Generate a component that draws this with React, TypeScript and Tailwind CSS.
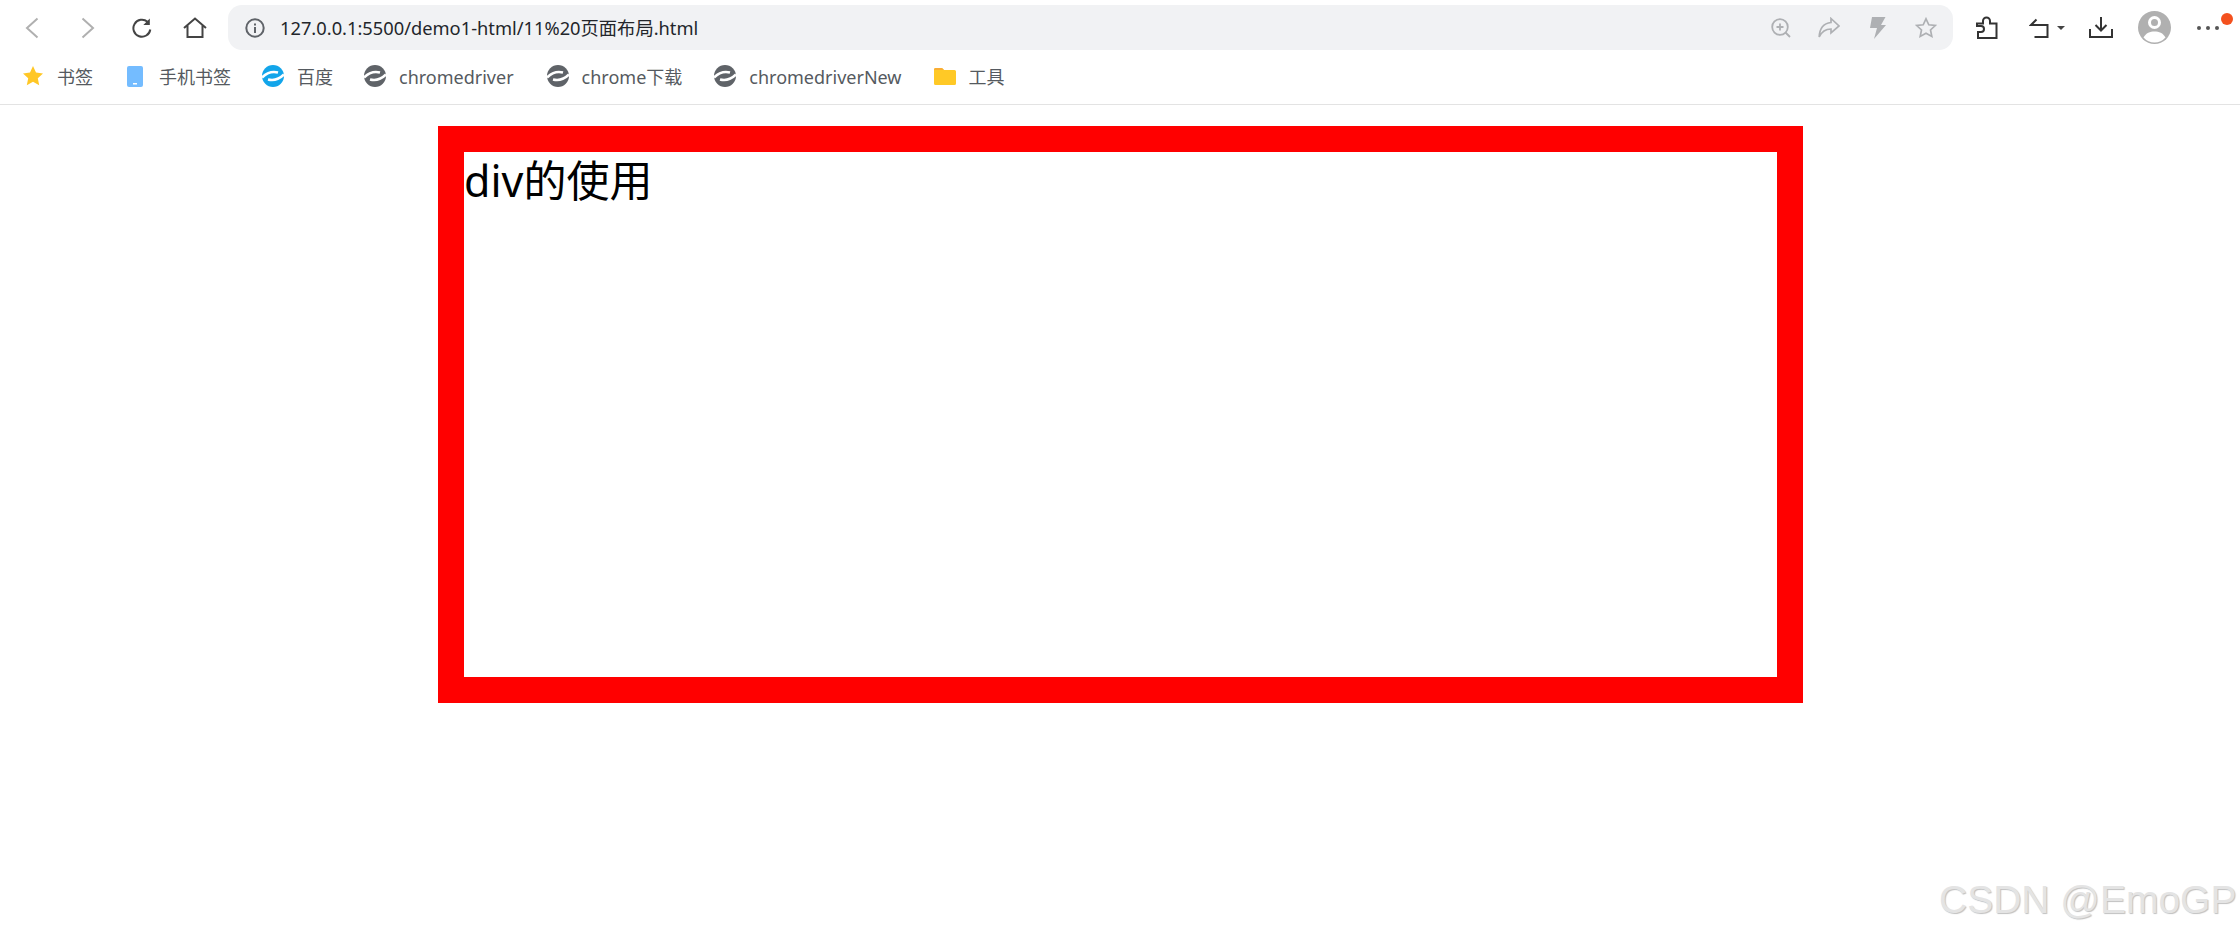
import type { ReactNode } from 'react';

const cjk = "font-['Noto_Sans','Noto_Sans_CJK_SC',sans-serif]";

function ChromeLogo({ color = '#5f6368' }: { color?: string }) {
  return (
    <svg width="22" height="22" viewBox="0 0 22 22" className="shrink-0">
      <circle cx="11" cy="11" r="11" fill={color} />
      <path
        d="M0 12.500C5 7.500 11 6.200 16 7.500M22 9.500C17 14.500 11 15.800 6 14.500"
        fill="none"
        stroke="#fff"
        strokeWidth="2.600"
      />
    </svg>
  );
}

function Star() {
  return (
    <svg width="20" height="20" viewBox="0 0 20 20" className="shrink-0">
      <path d="M10 0l3 6.6 7 .8-5.200 4.800 1.400 7L10 15.700 3.800 19.200l1.400-7L0 7.400l7-.8z" fill="#ffc726" />
    </svg>
  );
}

function Phone() {
  return (
    <svg width="16" height="21" viewBox="0 0 16 21" className="shrink-0">
      <rect width="16" height="21" rx="2" fill="#74bcff" />
      <rect x="6" y="17" width="4" height="1.500" fill="#fff" />
    </svg>
  );
}

function Folder() {
  return (
    <svg width="22" height="17" viewBox="0 0 22 17" className="shrink-0">
      <path d="M0 1.500A1.500 1.500 0 0 1 1.500 0H8l2 2h10.500A1.500 1.500 0 0 1 22 3.500v12a1.500 1.500 0 0 1-1.500 1.500h-19A1.500 1.500 0 0 1 0 15.500z" fill="#ffc926" />
      <path d="M0 1.500A1.500 1.500 0 0 1 1.500 0H8l2 2H0z" fill="#f9ad35" />
    </svg>
  );
}

function Bookmark({ icon, label, className }: { icon: ReactNode; label: string; className: string }) {
  return (
    <div className={`flex items-center ${className}`}>
      {icon}
      <span className="mt-[2px] text-[18px] leading-[24px] text-[#555a60] whitespace-nowrap">{label}</span>
    </div>
  );
}

export default function App() {
  return (
    <div className={`relative h-[935px] w-[2240px] overflow-hidden bg-white ${cjk}`}>
      {/* Nav row */}
      <div className="flex h-[55px] items-center">
        <svg width="14" height="22" viewBox="0 0 14 22" className="ml-[25px] shrink-0" fill="none" stroke="#b0b0b0" strokeWidth="2">
          <path d="M12.500 1.500L2 11l10.500 9.500" />
        </svg>
        <svg width="14" height="22" viewBox="0 0 14 22" className="ml-[42px] shrink-0" fill="none" stroke="#b0b0b0" strokeWidth="2">
          <path d="M1.500 1.500L12 11 1.500 20.500" />
        </svg>
        <svg width="20" height="20" viewBox="0 0 20 20" className="ml-[37px] shrink-0" fill="none" stroke="#444" strokeWidth="2">
          <path d="M15.500 3.800A8.500 8.500 0 1 0 18.300 11.500" />
          <path d="M17.800 0.500v6.500h-6.500z" fill="#444" stroke="none" />
        </svg>
        <svg width="24" height="21" viewBox="0 0 24 21" className="ml-[31px] shrink-0" fill="none" stroke="#444" strokeWidth="2">
          <path d="M1 11L12 1.500 23 11M4.500 8.500V20h15V8.500" />
        </svg>

        {/* Address bar */}
        <div className="ml-[21px] flex h-[45px] w-[1725px] items-center rounded-[14px] bg-[#f1f2f4]">
          <svg width="20" height="20" viewBox="0 0 20 20" className="ml-[17px] shrink-0" fill="none">
            <circle cx="10" cy="10" r="8.700" stroke="#5f6368" strokeWidth="2" />
            <rect x="9" y="9" width="2" height="6" fill="#5f6368" />
            <rect x="9" y="5.500" width="2" height="2" fill="#5f6368" />
          </svg>
          <span className="ml-[15px] whitespace-nowrap text-[18.3px] text-[#23262b]">
            127.0.0.1:5500/demo1-html/11%20页面布局.html
          </span>
          <svg width="20" height="20" viewBox="0 0 20 20" className="ml-auto shrink-0" fill="none" stroke="#aeb0b3" strokeWidth="1.800">
            <circle cx="9" cy="9" r="7.800" />
            <path d="M14.500 14.500L19 19M5.500 9h7M9 5.500v7" />
          </svg>
          <svg width="22" height="21" viewBox="0 0 22 21" className="ml-[27px] shrink-0" fill="none" stroke="#aeb0b3" strokeWidth="1.700">
            <path d="M13 1.500L21 9l-8 7v-4C8 12 4 14 1.200 20 1.500 12 5 6.500 13 5.500z" />
          </svg>
          <svg width="16" height="22" viewBox="0 0 16 22" className="ml-[30px] shrink-0">
            <path d="M2 0h13.500L11 8h5L4 22l3-11H0z" fill="#aeb0b3" />
          </svg>
          <svg width="22" height="21" viewBox="0 0 22 21" className="ml-[29px] mr-[16px] shrink-0" fill="none" stroke="#aeb0b3" strokeWidth="1.700">
            <path d="M11 1.800l2.800 6 6.500.7-4.800 4.500 1.300 6.400L11 16.200l-5.800 3.200 1.300-6.400L1.700 8.500l6.500-.7z" />
          </svg>
        </div>

        {/* Right side tools */}
        <svg width="22" height="23" viewBox="0 0 22 23" className="ml-[23px] shrink-0" fill="none" stroke="#333" strokeWidth="2">
          <path d="M1 7.500h6V5a3.500 3.500 0 0 1 7 0v2.500h6.500V22H2v-6h3a3 3 0 0 0 0-6H1z" />
        </svg>
        <svg width="20" height="20" viewBox="0 0 20 20" className="ml-[31px] shrink-0" fill="none" stroke="#333" strokeWidth="2">
          <path d="M7.500 1.500L2 7h16.500v12H5.500" />
        </svg>
        <svg width="8" height="4" viewBox="0 0 8 4" className="ml-[8px] shrink-0">
          <path d="M0 0h8L4 4z" fill="#444" />
        </svg>
        <svg width="24" height="21" viewBox="0 0 24 21" className="ml-[24px] shrink-0" fill="none" stroke="#333" strokeWidth="2">
          <path d="M12 0v13M6.500 8l5.500 5.500L17.500 8M1 12v8h22v-8" />
        </svg>
        <svg width="33" height="33" viewBox="0 0 33 33" className="ml-[25px] shrink-0">
          <circle cx="16.500" cy="16.500" r="16.500" fill="#b0b0b0" />
          <circle cx="16.500" cy="11.500" r="5" fill="none" stroke="#fff" strokeWidth="3" />
          <path d="M5.500 26.500C8 22 12 20.500 16.500 20.500S25 22 27.500 26.500A14.500 14.500 0 0 1 5.500 26.500z" fill="#fff" />
        </svg>
        <div className="ml-[26px] flex gap-[5px]">
          <span className="size-[4px] rounded-full bg-[#555]" />
          <span className="size-[4px] rounded-full bg-[#555]" />
          <span className="size-[4px] rounded-full bg-[#555]" />
        </div>
      </div>

      {/* Bookmarks row */}
      <div className="flex h-[50px] items-center border-b border-[#e3e3e3] pb-[7px] pl-[23px]">
        <Bookmark icon={<Star />} label="书签" className="gap-[14px]" />
        <Bookmark icon={<Phone />} label="手机书签" className="ml-[34px] gap-[16px]" />
        <Bookmark icon={<ChromeLogo color="#12a5ea" />} label="百度" className="ml-[31px] gap-[13px]" />
        <Bookmark icon={<ChromeLogo />} label="chromedriver" className="ml-[31px] gap-[13px]" />
        <Bookmark icon={<ChromeLogo />} label="chrome下载" className="ml-[33px] gap-[13px]" />
        <Bookmark icon={<ChromeLogo />} label="chromedriverNew" className="ml-[32px] gap-[13px]" />
        <Bookmark icon={<Folder />} label="工具" className="ml-[32px] gap-[13px]" />
      </div>

      {/* Page content */}
      <div className="ml-[438px] mt-[21px] h-[577px] w-[1365px] border-[26px] border-[#ff0000] text-[43px] leading-[58px] text-black">
        div的使用
      </div>

      {/* Notification dot + watermark */}
      <span className="absolute left-[2221px] top-[13px] size-[12px] rounded-full bg-[#f4511e]" />
      <span className="absolute left-[1939px] top-[875px] whitespace-nowrap font-['Liberation_Sans',sans-serif] text-[39px] leading-[50px] text-[#e4e4e4] [text-shadow:1px_1px_1px_#c0c0c0]">
        CSDN @EmoGP
      </span>
    </div>
  );
}
